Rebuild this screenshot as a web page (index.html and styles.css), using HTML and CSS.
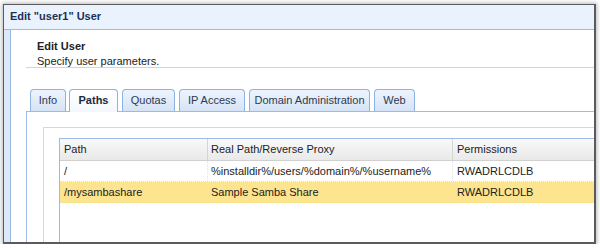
FILE: index.html
```html
<!DOCTYPE html>
<html>
<head>
<meta charset="utf-8">
<link rel="stylesheet" href="styles.css">
</head>
<body>
<div class="window">
  <div class="titlebar">Edit "user1" User</div>
  <div class="frame">
    <div class="content">
      <div class="intro">
        <div class="intro-title">Edit User</div>
        <div class="intro-desc">Specify user parameters.</div>
      </div>
      <div class="tabpanel">
        <div class="tabstrip">
          <div class="tab tab-info">Info</div>
          <div class="tab tab-paths active">Paths</div>
          <div class="tab tab-quotas">Quotas</div>
          <div class="tab tab-ip">IP Access</div>
          <div class="tab tab-domain">Domain Administration</div>
          <div class="tab tab-web">Web</div>
        </div>
        <div class="tabbody">
          <div class="fieldset">
            <div class="grid">
              <div class="row head">
                <div class="cell">Path</div>
                <div class="cell">Real Path/Reverse Proxy</div>
                <div class="cell">Permissions</div>
              </div>
              <div class="row">
                <div class="cell">/</div>
                <div class="cell">%installdir%/users/%domain%/%username%</div>
                <div class="cell">RWADRLCDLB</div>
              </div>
              <div class="row selected">
                <div class="cell">/mysambashare</div>
                <div class="cell">Sample Samba Share</div>
                <div class="cell">RWADRLCDLB</div>
              </div>
              <div class="grid-empty"></div>
            </div>
          </div>
        </div>
      </div>
    </div>
  </div>
</div>
</body>
</html>
```

FILE: styles.css
```css
html, body {
  margin: 0;
  padding: 0;
  background: #ffffff;
}

body {
  font-family: "Liberation Sans", Arial, sans-serif;
  font-size: 11px;
  color: #222;
  padding: 4px 0 0 3px;
}

.window {
  box-sizing: border-box;
  width: 593px;
  height: 240px;
  border: 1px solid #5b5b5b;
  border-right-width: 2px;
  border-bottom-width: 2px;
  box-shadow: 0 0 4px 1px rgba(0, 0, 0, 0.28);
  overflow: hidden;
  display: flex;
  flex-direction: column;
  background: #dfe8f6;
}

.titlebar {
  height: 24px;
  line-height: 22px;
  padding-left: 6px;
  font-weight: bold;
  color: #1b2f57;
  background: #eaf2fd;
  border-bottom: 1px solid #99bbe8;
  flex: none;
}

.frame {
  flex: 1;
  display: flex;
  padding-left: 6px;
  background: #dfe8f6;
}

.content {
  width: 700px;
  flex: none;
  background: #fff;
  border-left: 1px solid #99bbe8;
}

.intro {
  margin-left: 15px;
  padding: 9px 0 0 11px;
  border-bottom: 1px solid #d4d4d4;
  height: 28px;
}

.intro-title {
  font-weight: bold;
  line-height: 15px;
  color: #222;
}

.intro-desc {
  margin-top: 1px;
  line-height: 12px;
  color: #222;
}

.tabpanel {
  margin: 21px 0 0 15px;
}

.tabstrip {
  display: flex;
  padding-left: 4px;
  border-bottom: 1px solid #99bbe8;
  height: 22px;
}

.tab {
  box-sizing: border-box;
  height: 22px;
  line-height: 20px;
  margin-right: 4px;
  border: 1px solid #8db2e3;
  border-bottom: none;
  border-radius: 4px 4px 0 0;
  background: linear-gradient(#eef4fd, #d5e3f7);
  color: #2d3a4f;
  text-align: center;
  white-space: nowrap;
}

.tab-info { width: 36px; margin-right: 3px; }
.tab-paths { width: 49px; }
.tab-quotas { width: 53px; }
.tab-ip { width: 66px; }
.tab-domain { width: 121px; }
.tab-web { width: 41px; }

.tab.active {
  height: 23px;
  font-weight: bold;
  background: linear-gradient(#ffffff, #f4f8fe);
  color: #1d2a40;
}

.tabbody {
  border-left: 1px solid #99bbe8;
  padding: 15px 0 0 16px;
  height: 200px;
}

.fieldset {
  border-top: 1px solid #d8d8d8;
  border-left: 1px solid #d8d8d8;
  padding: 10px 0 0 15px;
  height: 200px;
}

.grid {
  border-top: 1px solid #99bbe8;
  border-left: 1px solid #99bbe8;
  height: 200px;
  width: 620px;
}

.row {
  display: grid;
  grid-template-columns: 148px 245px 1fr;
  height: 21px;
  box-sizing: border-box;
  border-bottom: 1px dotted #dcdcdc;
}

.row .cell {
  line-height: 20px;
  padding-left: 4px;
  border-right: 1px dotted #e4e4e4;
  white-space: nowrap;
  overflow: hidden;
}

.row .cell:nth-child(2) {
  padding-left: 3px;
}

.row.head {
  height: 22px;
  border-bottom: 1px solid #d0d0d0;
  background: linear-gradient(#f9f9f9, #e9e9e9);
}

.row.head .cell {
  border-right: 1px solid #d5d5d5;
  line-height: 21px;
}

.row.selected {
  background: #fde48e;
}
```
